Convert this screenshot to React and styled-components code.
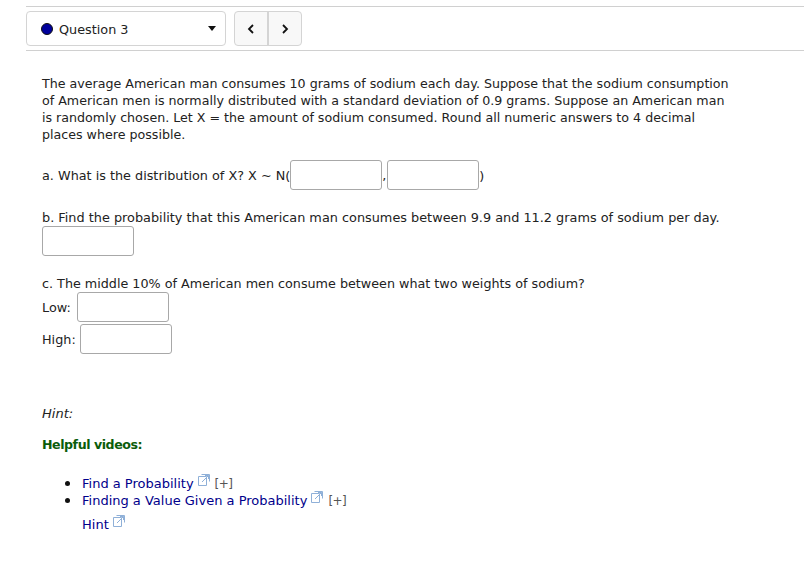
import React from 'react'
import styled, { createGlobalStyle } from 'styled-components'

const Global = createGlobalStyle`
    html, body {
        margin: 0;
        padding: 0;
        background: #fff;
    }
    body {
        font-family: "DejaVu Sans", sans-serif;
        font-size: 12.8px;
        color: #222;
    }
`

const Page = styled.div`
    width: 804px;
    height: 584px;
    overflow: hidden;
`

const Header = styled.div`
    margin: 6px 0 0 26px;
    padding-top: 4px;
    box-sizing: border-box;
    height: 45px;
    border-top: 1px solid #d0d0d0;
    border-bottom: 1px solid #d0d0d0;
    display: flex;
    gap: 8px;
`

const Select = styled.div`
    box-sizing: border-box;
    width: 200px;
    height: 35px;
    border: 1px solid #d4d4d4;
    border-radius: 4px;
    display: flex;
    align-items: center;
    padding: 0 9px 0 14px;
`

const Dot = styled.span`
    box-sizing: border-box;
    width: 12px;
    height: 12px;
    border-radius: 50%;
    background: #00009c;
    border: 1px solid #111;
    margin-right: 6px;
`

const SelectLabel = styled.span`
    flex: 1;
    padding-top: 1px;
`

const Caret = styled.span`
    width: 0;
    height: 0;
    border-left: 4px solid transparent;
    border-right: 4px solid transparent;
    border-top: 5px solid #111;
`

const Pager = styled.div`
    display: flex;
    box-sizing: border-box;
    width: 68px;
    height: 35px;
    border: 1px solid #d4d4d4;
    border-radius: 4px;
    background: #f8f8f8;
`

const PageButton = styled.div`
    flex: 1;
    display: flex;
    align-items: center;
    justify-content: center;
    & + & {
        border-left: 2px solid #d4d4d4;
    }
`

const Body = styled.div`
    padding: 24px 0 0 42px;
    width: 700px;
`

const Para = styled.p`
    margin: ${p => p.$top || 0}px 0 0;
    line-height: 17px;
    font-size: ${p => p.$size || 12.85}px;
`

const Intro = styled(Para)`
    max-width: 695px;
`

const Row = styled.div`
    display: flex;
    align-items: center;
    margin-top: ${p => p.$top || 0}px;
    line-height: 17px;
    white-space: pre;
`

const Field = styled.span`
    display: block;
    box-sizing: border-box;
    width: 92px;
    height: 30px;
    border: 1px solid #a8a8a8;
    border-radius: 3px;
    background: #fff;
    margin-left: ${p => p.$left || 0}px;
`

const Hint = styled.p`
    margin: 51px 0 0;
    line-height: 17px;
    font-style: italic;
    font-size: 13px;
`

const Videos = styled.p`
    margin: 14px 0 0;
    line-height: 17px;
    font-size: 12.6px;
    letter-spacing: -0.45px;
    font-weight: bold;
    color: #0b5c0b;
`

const VideoList = styled.ul`
    margin: 21px 0 0;
    padding: 0 0 0 40px;
    line-height: 17px;
    font-size: 13px;
    li {
        height: 17px;
    }
    li::marker {
        font-size: 17px;
        color: #111;
    }
`

const A = styled.span`
    color: #00008b;
`

const More = styled.span`
    color: #555;
    margin-left: 5px;
    font-size: 12px;
    letter-spacing: -0.6px;
`

const HintLink = styled.div`
    margin: 8px 0 0 40px;
    line-height: 17px;
    font-size: 13px;
`

const ExtSvg = styled.svg`
    margin: -4px 0 0 4px;
    vertical-align: 2px;
`

const ExtIcon = () => (
    <ExtSvg width="12" height="12" viewBox="0 0 12 12" fill="none" stroke="#8fb0d8" strokeWidth="1">
        <path d="M.5 2.5h8v9h-8z" />
        <path d="M3.5.5h8v7" />
        <path d="M4 8l6.5-6.5M7 1.5h3.5V5" />
    </ExtSvg>
)

const Chevron = ({ d }) => (
    <svg width="10" height="12" viewBox="0 0 10 12" fill="none" stroke="#111" strokeWidth="1.8">
        <path d={d} />
    </svg>
)

export default function App() {
    return (
        <Page>
            <Global />
            <Header>
                <Select>
                    <Dot />
                    <SelectLabel>Question 3</SelectLabel>
                    <Caret />
                </Select>
                <Pager>
                    <PageButton><Chevron d="M7 2L3 6l4 4" /></PageButton>
                    <PageButton><Chevron d="M3 2l4 4-4 4" /></PageButton>
                </Pager>
            </Header>
            <Body>
                <Intro $size={12.65}>The average American man consumes 10 grams of sodium each day. Suppose that the sodium consumption of American men is normally distributed with a standard deviation of 0.9 grams. Suppose an American man is randomly chosen. Let X = the amount of sodium consumed. Round all numeric answers to 4 decimal places where possible.</Intro>
                <Row $top={17}>a. What is the distribution of X? X ~ N(<Field />,<Field $left={1} />)</Row>
                <Para $top={19}>b. Find the probability that this American man consumes between 9.9 and 11.2 grams of sodium per day.</Para>
                <Field />
                <Para $top={19} $size={12.74}>c. The middle 10% of American men consume between what two weights of sodium?</Para>
                <Row>Low: <Field $left={2} /></Row>
                <Row $top={2}>High: <Field /></Row>
                <Hint>Hint:</Hint>
                <Videos>Helpful videos:</Videos>
                <VideoList>
                    <li><A>Find a Probability</A><ExtIcon /><More>[+]</More></li>
                    <li><A>Finding a Value Given a Probability</A><ExtIcon /><More>[+]</More></li>
                </VideoList>
                <HintLink><A>Hint</A><ExtIcon /></HintLink>
            </Body>
        </Page>
    )
}
